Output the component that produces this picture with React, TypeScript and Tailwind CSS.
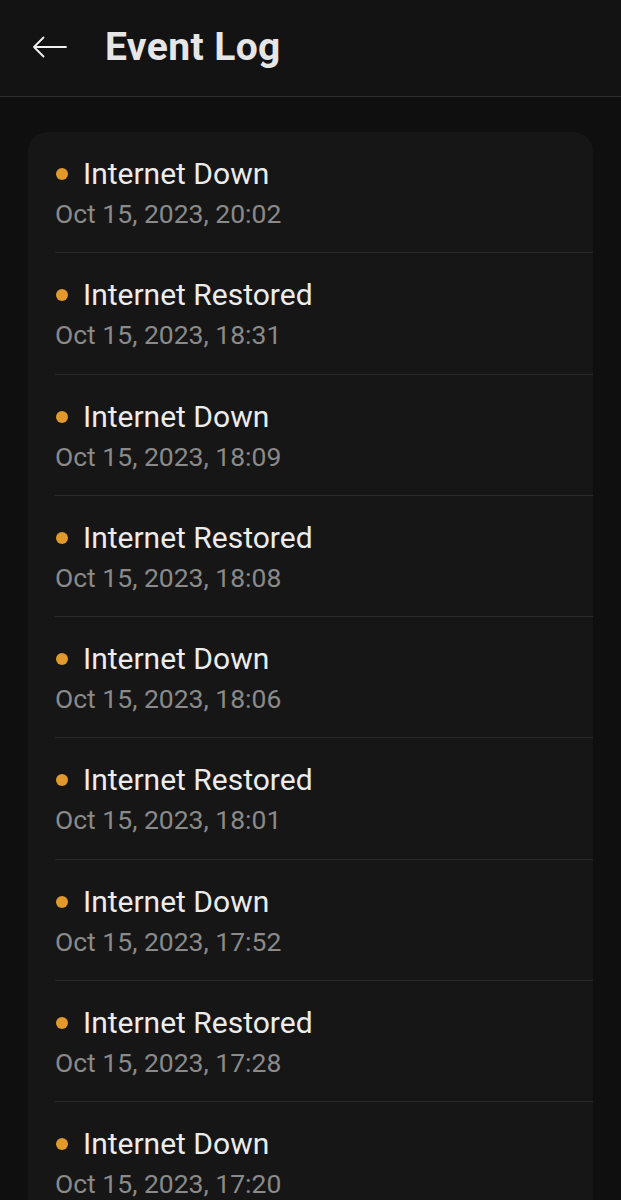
import React from "react";

type LogEvent = { title: string; time: string };

const EVENTS: LogEvent[] = [
  { title: "Internet Down", time: "Oct 15, 2023, 20:02" },
  { title: "Internet Restored", time: "Oct 15, 2023, 18:31" },
  { title: "Internet Down", time: "Oct 15, 2023, 18:09" },
  { title: "Internet Restored", time: "Oct 15, 2023, 18:08" },
  { title: "Internet Down", time: "Oct 15, 2023, 18:06" },
  { title: "Internet Restored", time: "Oct 15, 2023, 18:01" },
  { title: "Internet Down", time: "Oct 15, 2023, 17:52" },
  { title: "Internet Restored", time: "Oct 15, 2023, 17:28" },
  { title: "Internet Down", time: "Oct 15, 2023, 17:20" },
];

export default function App() {
  return (
    <div className="h-[1200px] overflow-hidden bg-[#0f0f0f] text-[#ececec] font-['Roboto','Noto_Sans',sans-serif]">
      {/* Header */}
      <header className="h-[97px] flex items-center bg-[#131313] border-b border-[#2c2c2c]">
        <svg className="ml-[32px] mt-[-2px]" width="35" height="22" viewBox="0 0 35 22" fill="none">
          <path d="M34 11H2M11.5 1.5L2 11l9.5 9.5" stroke="#f2f2f2" strokeWidth="1.8" strokeLinecap="round" strokeLinejoin="round" />
        </svg>
        <h1 className="ml-[38px] mt-[-2px] text-[39px] font-bold tracking-[0.4px] text-[#e6e6e6]">Event Log</h1>
      </header>

      {/* List card */}
      <div className="px-[28px] pt-[35px]">
        <div className="bg-[#161616] rounded-[20px] pl-[27px]">
          {EVENTS.map((ev, idx) => (
            <div
              key={idx}
              className={`h-[121.3px] flex flex-col pt-[24px] ${idx < EVENTS.length - 1 ? "border-b border-[#2a2a2a]" : ""}`}
            >
              <div className="flex items-center h-[36px]">
                <span className="ml-[1px] w-[12px] h-[12px] rounded-full bg-[#e0992a] mr-[15px]" />
                <span className="text-[30px] leading-[36px] text-[#ececec]">{ev.title}</span>
              </div>
              <span className="mt-[7px] text-[26.5px] leading-[30px] text-[#8a8a8a]">{ev.time}</span>
            </div>
          ))}
        </div>
      </div>
    </div>
  );
}
